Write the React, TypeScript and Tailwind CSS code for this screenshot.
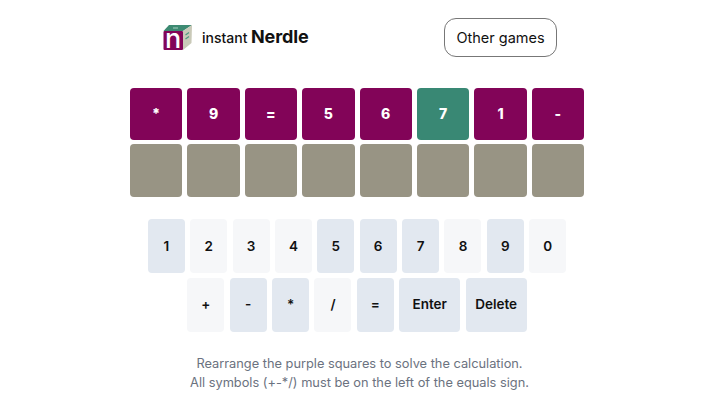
const FONT = "font-['Inter','Noto_Sans',sans-serif]";

const tiles: { c: string; green?: boolean }[] = [
  { c: "*" },
  { c: "9" },
  { c: "=" },
  { c: "5" },
  { c: "6" },
  { c: "7", green: true },
  { c: "1" },
  { c: "-" },
];

const row1: { c: string; on: boolean }[] = [
  { c: "1", on: true },
  { c: "2", on: false },
  { c: "3", on: false },
  { c: "4", on: false },
  { c: "5", on: true },
  { c: "6", on: true },
  { c: "7", on: true },
  { c: "8", on: false },
  { c: "9", on: true },
  { c: "0", on: false },
];

const row2: { c: string; on: boolean; wide?: boolean }[] = [
  { c: "+", on: false },
  { c: "-", on: true },
  { c: "*", on: true },
  { c: "/", on: false },
  { c: "=", on: true },
  { c: "Enter", on: true, wide: true },
  { c: "Delete", on: true, wide: true },
];

function Logo() {
  return (
    <svg width="30" height="33" viewBox="0 -3 30 33" className="shrink-0 -my-[3px]">
      <path d="M0.5 7 L6 1 L29 1 L20 7 Z" fill="#3d8a72" />
      <path d="M20 7 L29 1 L28.5 19 L20 26 Z" fill="#c9c9b8" />
      <path d="M22.5 11 L26 8.5 M22.5 15 L26 12.5" stroke="#4f9a82" strokeWidth="1.3" fill="none" />
      <path d="M10 4 L15 4" stroke="#a8d0c0" strokeWidth="1" />
      <rect x="0.5" y="7" width="19.5" height="19" rx="1" fill="#820458" />
      <text x="10.2" y="24" textAnchor="middle" fontSize="27" fontWeight="500" fill="#ffffff" fontFamily="Inter, sans-serif">n</text>
    </svg>
  );
}

export default function App() {
  return (
    <div className="w-[709px] h-[411px] overflow-hidden bg-white">
      <div className={`w-[714px] flex flex-col items-center ${FONT}`}>
        <header className="w-[454px] h-[87.6px] pt-[18px] flex items-start">
          <div className="ml-[33px] h-[38px] flex items-center">
            <Logo />
            <span className="ml-[9px] mt-[2px] text-[14px] font-medium text-[#111111] leading-none">instant</span>
            <span className="ml-[3.5px] text-[18px] font-bold tracking-[-0.1px] text-[#111111] leading-none">Nerdle</span>
          </div>
          <button className="ml-auto mr-[27px] w-[113px] h-[39px] pt-[1px] rounded-[12px] border border-[#777777] text-[14.5px] text-[#111111]">
            Other games
          </button>
        </header>

        <section className="flex flex-col gap-[4px]">
          <div className="flex gap-[5px]">
            {tiles.map((t, i) => (
              <div
                key={i}
                className={`w-[52.4px] h-[52.5px] rounded-[4px] flex items-center justify-center text-white text-[14px] font-extrabold ${
                  t.green ? "bg-[#398874]" : "bg-[#820458]"
                }`}
              >
                {t.c}
              </div>
            ))}
          </div>
          <div className="flex gap-[5px]">
            {tiles.map((_, i) => (
              <div key={i} className="w-[52.4px] h-[52.5px] rounded-[4px] bg-[#989484]" />
            ))}
          </div>
        </section>

        <section className="mt-[22.7px] flex flex-col items-center gap-[4.4px]">
          <div className="flex gap-[5.4px]">
            {row1.map((k) => (
              <div
                key={k.c}
                className={`w-[37px] h-[54px] rounded-[4px] flex items-center justify-center text-[13.5px] font-semibold text-[#111111] ${
                  k.on ? "bg-[#e2e8f0]" : "bg-[#f6f7f9]"
                }`}
              >
                {k.c}
              </div>
            ))}
          </div>
          <div className="flex gap-[5.4px]">
            {row2.map((k) => (
              <div
                key={k.c}
                className={`${k.wide ? "w-[61px]" : "w-[37px]"} h-[54px] pb-[1px] rounded-[4px] flex items-center justify-center text-[13.5px] font-semibold text-[#111111] ${
                  k.on ? "bg-[#e2e8f0]" : "bg-[#f6f7f9]"
                }`}
              >
                {k.c}
              </div>
            ))}
          </div>
        </section>

        <p className="mt-[22px] pl-[5px] text-center text-[12.8px] leading-[19px] text-[#6b7280]">
          Rearrange the purple squares to solve the calculation.
          <br />
          All symbols (+-*/) must be on the left of the equals sign.
        </p>
      </div>
    </div>
  );
}
